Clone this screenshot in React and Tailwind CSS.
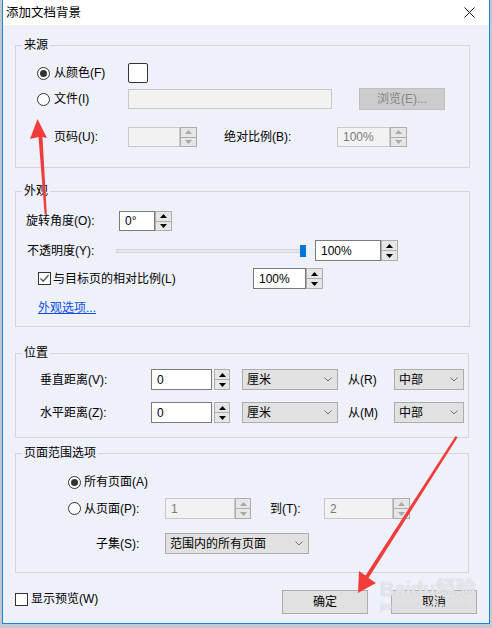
import React from 'react';

const font = "font-['Liberation_Sans','Noto_Sans_CJK_SC',sans-serif]";

const Up = ({ c }) => (
    <svg width="7" height="4" viewBox="0 0 7 4"><path d="M0 4 L3.5 0 L7 4 Z" fill={c} /></svg>
);
const Down = ({ c }) => (
    <svg width="7" height="4" viewBox="0 0 7 4"><path d="M0 0 L3.5 4 L7 0 Z" fill={c} /></svg>
);

// the two little stacked arrow buttons
const SpinBtns = ({ disabled, className = '' }) => (
    <div className={`flex h-full flex-col gap-[1px] border border-[#adadad] bg-[#adadad] ${className}`}>
        <div className="flex flex-1 items-center justify-center bg-[#e6e6e6]"><Up c={disabled ? '#a8a8a8' : '#000'} /></div>
        <div className="flex flex-1 items-center justify-center bg-[#e6e6e6]"><Down c={disabled ? '#a8a8a8' : '#000'} /></div>
    </div>
);

const Field = ({ value, disabled, className = '' }) => (
    <div className={`flex h-full items-center border pl-[5px] ${disabled ? 'border-[#c8c8c8] bg-[#f2f2f2] text-[#7a7a7a]' : 'border-[#7a7a7a] bg-white text-black'} ${className}`}>
        {value}
    </div>
);

const Select = ({ value, className = '' }) => (
    <div className={`flex h-full items-center justify-between border border-[#adadad] bg-[#e1e1e1] pl-[4px] pr-[5px] ${className}`}>
        <span>{value}</span>
        <svg width="8" height="5" viewBox="0 0 8 5"><path d="M0.5 0.5 L4 4 L7.5 0.5" fill="none" stroke="#707070" /></svg>
    </div>
);

const Radio = ({ checked }) => (
    <div className="flex h-[13px] w-[13px] shrink-0 items-center justify-center rounded-full border border-[#333] bg-white">
        {checked && <div className="h-[7px] w-[7px] rounded-full bg-[#333]" />}
    </div>
);

const Checkbox = ({ checked }) => (
    <div className="flex h-[13px] w-[13px] shrink-0 items-center justify-center border border-[#333] bg-white">
        {checked && (
            <svg width="11" height="11" viewBox="0 0 11 11"><path d="M1.5 5.5 L4.2 8.3 L9.5 2.2" fill="none" stroke="#555" strokeWidth="1.4" /></svg>
        )}
    </div>
);

const Group = ({ title, className = '', children }) => (
    <div className={`relative ml-[12px] border border-[#d5d6dc] ${className}`}>
        <span className="absolute left-[6px] top-[-9px] bg-[#eef0fa] px-[2px] leading-[16px]">{title}</span>
        {children}
    </div>
);

const Arrows = () => (
    <svg className="pointer-events-none absolute left-0 top-0" width="492" height="628" viewBox="0 0 492 628">
        <polygon points="37.5,119 30,139 38.5,137 44.6,214 46.8,214 42.5,137 47,138" fill="#f23c3c" />
        <polygon points="358,593 359,571 365.5,575.5 455.6,436 457.6,437.3 368.5,578 376,583" fill="#f23c3c" />
    </svg>
);

export default function App() {
    return (
        <div className={`relative h-[628px] w-[492px] overflow-hidden bg-[#c3c8d1] text-[12px] leading-[16px] text-black ${font}`}>
            <div className="ml-[2px] flex h-[624px] w-[488px] flex-col border-x border-b border-[#1a86d9] bg-[#eef0fa]">
                {/* title bar */}
                <div className="flex h-[25px] shrink-0 items-center justify-between bg-white pl-[3px] pr-[14px]">
                    <span className="text-[12.5px]">添加文档背景</span>
                    <svg width="11" height="11" viewBox="0 0 11 11"><path d="M0.5 0.5 L10.5 10.5 M10.5 0.5 L0.5 10.5" stroke="#111" strokeWidth="1" /></svg>
                </div>

                {/* 来源 */}
                <Group title="来源" className="mt-[20px] h-[123px] w-[455px]">
                    <div className="mt-[17px] flex h-[20px] items-center pl-[21px]">
                        <div className="flex w-[91px] items-center gap-[4px]"><Radio checked /><span>从颜色(F)</span></div>
                        <div className="h-[20px] w-[20px] rounded-[2px] border border-[#333] bg-white" />
                    </div>
                    <div className="mt-[5px] flex h-[22px] items-center pl-[21px]">
                        <div className="flex w-[91px] items-center gap-[4px]"><Radio /><span>文件(I)</span></div>
                        <Field disabled value="" className="!h-[20px] w-[204px]" />
                        <div className="ml-[27px] flex h-[22px] w-[86px] items-center justify-center border border-[#bfbfbf] bg-[#cccccc] text-[#858585]">浏览(E)...</div>
                    </div>
                    <div className="mt-[17px] flex h-[20px] items-center pl-[38px]">
                        <span className="w-[74px]">页码(U):</span>
                        <Field disabled value="" className="w-[52px]" />
                        <SpinBtns disabled className="w-[17px]" />
                        <span className="ml-[27px] w-[113px]">绝对比例(B):</span>
                        <Field disabled value="100%" className="w-[53px]" />
                        <SpinBtns disabled className="w-[17px]" />
                    </div>
                </Group>

                {/* 外观 */}
                <Group title="外观" className="mt-[23px] h-[136px] w-[455px]">
                    <div className="mt-[19px] flex h-[20px] items-center pl-[10px]">
                        <span className="w-[93px]">旋转角度(O):</span>
                        <Field value="0°" className="w-[36px]" />
                        <SpinBtns className="w-[17px]" />
                    </div>
                    <div className="mt-[9px] flex h-[21px] items-center pl-[11px]">
                        <span className="w-[89px]">不透明度(Y):</span>
                        <div className="relative flex h-[12px] w-[190px] items-center">
                            <div className="h-[4px] w-full border border-[#d6d6d6] bg-[#e7e7e7]" />
                            <div className="absolute right-0 top-0 h-[12px] w-[6px] bg-[#0078d7]" />
                        </div>
                        <Field value="100%" className="ml-[9px] w-[66px]" />
                        <SpinBtns className="w-[17px]" />
                    </div>
                    <div className="mt-[7px] flex h-[21px] items-center pl-[22px]">
                        <Checkbox checked />
                        <span className="ml-[2px] w-[200px]">与目标页的相对比例(L)</span>
                        <Field value="100%" className="w-[53px]" />
                        <SpinBtns className="w-[17px]" />
                    </div>
                    <div className="mt-[11px] pl-[22px]">
                        <span className="text-[#0b4fe0] underline">外观选项...</span>
                    </div>
                </Group>

                {/* 位置 */}
                <Group title="位置" className="mt-[26px] h-[85px] w-[454px]">
                    <div className="mt-[15px] flex h-[21px] items-center pl-[24px]">
                        <span className="w-[111px]">垂直距离(V):</span>
                        <Field value="0" className="w-[61px]" />
                        <SpinBtns className="ml-[2px] w-[16px]" />
                        <Select value="厘米" className="ml-[12px] w-[96px]" />
                        <span className="ml-[10px] w-[46px]">从(R)</span>
                        <Select value="中部" className="w-[70px]" />
                    </div>
                    <div className="mt-[12px] flex h-[21px] items-center pl-[24px]">
                        <span className="w-[111px]">水平距离(Z):</span>
                        <Field value="0" className="w-[61px]" />
                        <SpinBtns className="ml-[2px] w-[16px]" />
                        <Select value="厘米" className="ml-[12px] w-[96px]" />
                        <span className="ml-[10px] w-[46px]">从(M)</span>
                        <Select value="中部" className="w-[70px]" />
                    </div>
                </Group>

                {/* 页面范围选项 */}
                <Group title="页面范围选项" className="mt-[15px] h-[120px] w-[454px]">
                    <div className="mt-[20px] flex h-[16px] items-center gap-[3px] pl-[52px]">
                        <Radio checked /><span>所有页面(A)</span>
                    </div>
                    <div className="mt-[8px] flex h-[21px] items-center pl-[52px]">
                        <div className="flex w-[97px] items-center gap-[3px]"><Radio /><span>从页面(P):</span></div>
                        <Field disabled value="1" className="w-[70px]" />
                        <SpinBtns disabled className="w-[16px]" />
                        <span className="ml-[19px] w-[54px]">到(T):</span>
                        <Field disabled value="2" className="w-[69px]" />
                        <SpinBtns disabled className="w-[17px]" />
                    </div>
                    <div className="mt-[14px] flex h-[21px] items-center pl-[80px]">
                        <span className="w-[69px]">子集(S):</span>
                        <Select value="范围内的所有页面" className="w-[144px]" />
                    </div>
                </Group>

                {/* bottom row */}
                <div className="mt-[17px] flex h-[24px] items-start pl-[12px] pr-[12px]">
                    <div className="mt-[1px] flex items-center gap-[3px]">
                        <Checkbox /><span>显示预览(W)</span>
                    </div>
                    <div className="ml-auto flex h-[24px] w-[86px] items-center justify-center border border-[#adadad] bg-[#e1e1e1]">确定</div>
                    <div className="ml-[23px] flex h-[24px] w-[86px] items-center justify-center border border-[#adadad] bg-[#e1e1e1]">取消</div>
                </div>
            </div>

            {/* baidu watermark */}
            <div className="pointer-events-none absolute left-[380px] top-[578px] flex flex-col items-start text-white/60">
                <span className="text-[20px] font-bold leading-[22px] [text-shadow:0_0_1px_#b8bcc8]">Baidu经验</span>
                <span className="text-[11px] leading-[12px] [text-shadow:0_0_1px_#b8bcc8]">jingyan.baidu.com</span>
            </div>

            <Arrows />
        </div>
    );
}
